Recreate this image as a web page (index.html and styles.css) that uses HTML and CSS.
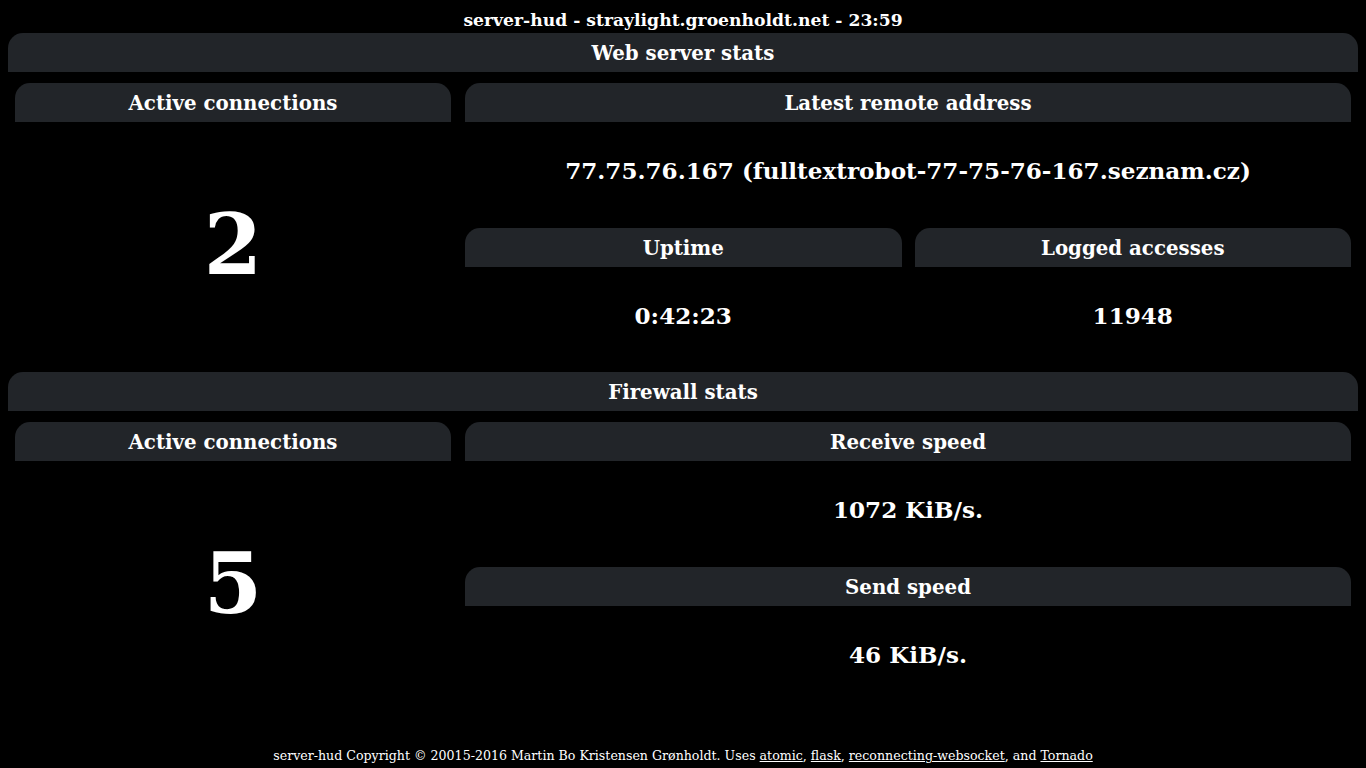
FILE: index.html
```html
<!DOCTYPE html>
<html>
<head>
<meta charset="utf-8">
<title>server-hud</title>
<link rel="stylesheet" href="styles.css">
</head>
<body>
<div class="title">server-hud - straylight.groenholdt.net - 23:59</div>

<section class="section">
  <div class="section-head">Web server stats</div>
  <div class="section-body">
    <div class="card tall">
      <div class="card-head">Active connections</div>
      <div class="card-value big">2</div>
    </div>
    <div class="col">
      <div class="card">
        <div class="card-head">Latest remote address</div>
        <div class="card-value">77.75.76.167 (fulltextrobot-77-75-76-167.seznam.cz)</div>
      </div>
      <div class="pair">
        <div class="card">
          <div class="card-head">Uptime</div>
          <div class="card-value">0:42:23</div>
        </div>
        <div class="card">
          <div class="card-head">Logged accesses</div>
          <div class="card-value">11948</div>
        </div>
      </div>
    </div>
  </div>
</section>

<section class="section">
  <div class="section-head">Firewall stats</div>
  <div class="section-body">
    <div class="card tall">
      <div class="card-head">Active connections</div>
      <div class="card-value big">5</div>
    </div>
    <div class="col">
      <div class="card">
        <div class="card-head">Receive speed</div>
        <div class="card-value">1072 KiB/s.</div>
      </div>
      <div class="card">
        <div class="card-head">Send speed</div>
        <div class="card-value">46 KiB/s.</div>
      </div>
    </div>
  </div>
</section>

<footer class="footer">server-hud Copyright © 20015-2016 Martin Bo Kristensen Grønholdt. Uses <a href="#">atomic</a>, <a href="#">flask</a>, <a href="#">reconnecting-websocket</a>, and <a href="#">Tornado</a></footer>
</body>
</html>
```

FILE: styles.css
```css
html, body {
  background: #000;
}
body {
  margin: 0;
  padding: 8px 8px 0;
  min-height: 100vh;
  box-sizing: border-box;
  display: flex;
  flex-direction: column;
  color: #fff;
  font-family: "DejaVu Serif", serif;
  font-weight: bold;
}
.title {
  height: 25px;
  line-height: 25px;
  font-size: 17.2px;
  text-align: center;
}
.section-head {
  height: 38px;
  padding-top: 1px;
  line-height: 38px;
  background: #222529;
  border-radius: 15px 15px 0 0;
  text-align: center;
  font-size: 19.8px;
}
.section-body {
  display: grid;
  grid-template-columns: 436px 1fr;
  gap: 14px;
  padding: 11px 7px 9px;
}
.col {
  display: flex;
  flex-direction: column;
  gap: 10px;
}
.pair {
  display: grid;
  grid-template-columns: 1fr 1fr;
  gap: 13px;
}
.card {
  display: flex;
  flex-direction: column;
}
.card-head {
  height: 37px;
  padding-top: 2px;
  line-height: 37px;
  background: #222529;
  border-radius: 15px 15px 0 0;
  text-align: center;
  font-size: 19.8px;
}
.card-value {
  height: 96px;
  display: flex;
  align-items: center;
  justify-content: center;
  font-size: 23.1px;
}
.tall .card-value {
  height: auto;
  flex: 1;
}
.card-value.big {
  font-size: 84px;
  padding-top: 4px;
}
.footer {
  margin-top: auto;
  height: 24px;
  line-height: 24px;
  text-align: center;
  font-size: 12.6px;
  font-weight: normal;
}
.footer a {
  color: #fff;
  text-decoration: underline;
}
```
